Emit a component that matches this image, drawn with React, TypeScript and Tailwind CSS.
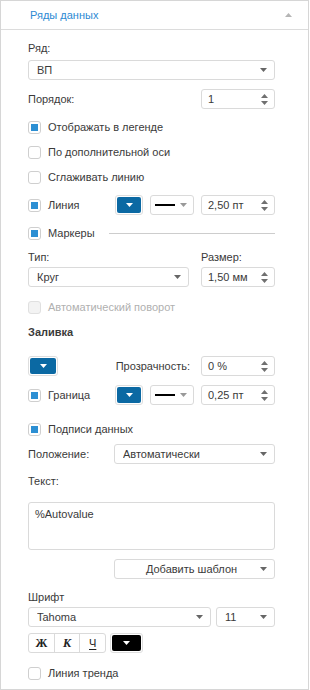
import type { ReactNode } from 'react'

/* Panel "Ряды данных" — property sheet for a chart series */

const font = { fontFamily: '"Liberation Sans", Arial, sans-serif' }

function Caret({ className = '' }: { className?: string }) {
  return (
    <svg width="7" height="4" viewBox="0 0 7 4" className={className}>
      <path d="M0 0h7L3.5 4z" fill="currentColor" />
    </svg>
  )
}

function SpinArrows() {
  return (
    <div className="flex flex-col items-center gap-[3px] text-[#707070]">
      <svg width="7" height="4" viewBox="0 0 7 4">
        <path d="M0 4h7L3.5 0z" fill="currentColor" />
      </svg>
      <svg width="7" height="4" viewBox="0 0 7 4">
        <path d="M0 0h7L3.5 4z" fill="currentColor" />
      </svg>
    </div>
  )
}

function Select({ value, className = '', center = false }: { value: string; className?: string; center?: boolean }) {
  return (
    <div
      className={`flex h-5 items-center rounded-[3px] border border-[#dadada] bg-white pl-2 pr-[7px] ${className}`}
    >
      <span className={`flex-1 truncate ${center ? 'text-center' : ''}`}>{value}</span>
      <Caret className="text-[#666]" />
    </div>
  )
}

function Spin({ value }: { value: string }) {
  return (
    <div className="flex h-5 w-[74px] items-center rounded-[3px] border border-[#dadada] bg-white pl-[6px] pr-[6px]">
      <span className="flex-1">{value}</span>
      <SpinArrows />
    </div>
  )
}

function Check({ checked = false, disabled = false, children }: { checked?: boolean; disabled?: boolean; children: ReactNode }) {
  return (
    <div className="flex h-[14px] items-center">
      <div
        className={`flex h-[13px] w-[13px] items-center justify-center rounded-[3px] border ${
          disabled ? 'border-[#e0e0e0] bg-[#f3f3f3]' : 'border-[#cfcfcf] bg-white'
        }`}
      >
        {checked && <div className="h-[7px] w-[7px] bg-[#2c8fd3]" />}
      </div>
      <span className={`ml-[7px] ${disabled ? 'text-[#b0b0b0]' : ''}`}>{children}</span>
    </div>
  )
}

function ColorBtn({ color, className = 'w-[28px]' }: { color: string; className?: string }) {
  return (
    <div className={`h-5 rounded-[3px] border border-[#dedede] bg-white p-[1px] ${className}`}>
      <div className="flex h-full w-full items-center justify-center rounded-[2px]" style={{ background: color }}>
        <Caret className="text-white" />
      </div>
    </div>
  )
}

function LineStyle() {
  return (
    <div className="flex h-5 w-[44px] items-center rounded-[3px] border border-[#dadada] bg-white pl-1 pr-[6px]">
      <div className="h-[2px] w-5 bg-black" />
      <div className="flex-1" />
      <Caret className="text-[#999]" />
    </div>
  )
}

export default function App() {
  return (
    <div style={font} className="h-[690px] w-[310px] bg-white text-[11px] text-[#3a3a3a]">
      <div className="flex h-full w-[309px] flex-col border border-[#d6d6d6]">
        <div className="flex h-[29px] shrink-0 items-center border-b border-[#dcdcdc] pl-[29px] pr-[16px]">
          <span className="flex-1 text-[#2d8ad3]">Ряды данных</span>
          <svg width="7" height="4" viewBox="0 0 7 4" className="text-[#b5b5b5]">
            <path d="M0 4h7L3.5 0z" fill="currentColor" />
          </svg>
        </div>

        <div className="flex flex-col pl-[27px] pr-[33px]">
          <div className="mt-[10px] flex h-4 items-center">Ряд:</div>
          <Select value="ВП" className="mt-[4px]" />

          <div className="mt-[9px] flex h-5 items-center justify-between">
            <span>Порядок:</span>
            <Spin value="1" />
          </div>

          <div className="mt-[11px]">
            <Check checked>Отображать в легенде</Check>
          </div>
          <div className="mt-[11px]">
            <Check>По дополнительной оси</Check>
          </div>
          <div className="mt-[11px]">
            <Check>Сглаживать линию</Check>
          </div>

          <div className="mt-[11px] flex h-5 items-center">
            <div className="flex-1">
              <Check checked>Линия</Check>
            </div>
            <ColorBtn color="#0b69a3" />
            <div className="ml-[7px]">
              <LineStyle />
            </div>
            <div className="ml-[7px]">
              <Spin value="2,50 пт" />
            </div>
          </div>

          <div className="mt-[11px] flex h-[14px] items-center">
            <Check checked>Маркеры</Check>
            <div className="ml-[14px] h-px flex-1 bg-[#cdcdcd]" />
          </div>

          <div className="mt-[9px] flex h-4 items-center justify-between">
            <span>Тип:</span>
            <span className="w-[74px]">Размер:</span>
          </div>
          <div className="mt-[2px] flex h-5 items-center justify-between">
            <Select value="Круг" className="w-[161px]" />
            <Spin value="1,50 мм" />
          </div>

          <div className="mt-[13px]">
            <Check disabled>Автоматический поворот</Check>
          </div>

          <div className="mt-[10px] flex h-4 items-center font-bold">Заливка</div>

          <div className="mt-[16px] flex h-5 items-center">
            <ColorBtn color="#0b69a3" className="w-[30px]" />
            <span className="ml-auto mr-[11px]">Прозрачность:</span>
            <Spin value="0 %" />
          </div>

          <div className="mt-[9px] flex h-5 items-center">
            <div className="flex-1">
              <Check checked>Граница</Check>
            </div>
            <ColorBtn color="#0b69a3" />
            <div className="ml-[7px]">
              <LineStyle />
            </div>
            <div className="ml-[7px]">
              <Spin value="0,25 пт" />
            </div>
          </div>

          <div className="mt-[17px]">
            <Check checked>Подписи данных</Check>
          </div>

          <div className="mt-[8px] flex h-5 items-center justify-between">
            <span>Положение:</span>
            <Select value="Автоматически" className="w-[161px]" />
          </div>

          <div className="mt-[9px] flex h-4 items-center">Текст:</div>
          <div className="mt-[13px] h-[48px] rounded-[3px] border border-[#dadada] px-[6px] pt-[3px]">%Autovalue</div>

          <div className="mt-[9px] flex justify-end">
            <Select value="Добавить шаблон" center className="w-[161px]" />
          </div>

          <div className="mt-[10px] flex h-4 items-center">Шрифт</div>
          <div className="mt-[2px] flex h-5 items-center justify-between">
            <Select value="Tahoma" className="w-[183px]" />
            <Select value="11" className="w-[59px]" />
          </div>

          <div className="mt-[6px] flex h-5 items-center">
            <div className="flex h-5 w-[78px] rounded-[3px] border border-[#dadada] bg-white text-[12px] text-[#222]">
              <div className="flex flex-1 items-center justify-center border-r border-[#dadada] font-bold" style={{ fontFamily: '"Liberation Serif", serif' }}>
                Ж
              </div>
              <div
                className="flex flex-1 items-center justify-center border-r border-[#dadada] font-bold italic"
                style={{ fontFamily: '"Liberation Serif", serif' }}
              >
                К
              </div>
              <div className="flex flex-1 items-center justify-center text-[11px] underline underline-offset-2">Ч</div>
            </div>
            <ColorBtn color="#000000" className="ml-[4px] w-[33px]" />
          </div>

          <div className="mt-[13px]">
            <Check>Линия тренда</Check>
          </div>
        </div>
      </div>
    </div>
  )
}
